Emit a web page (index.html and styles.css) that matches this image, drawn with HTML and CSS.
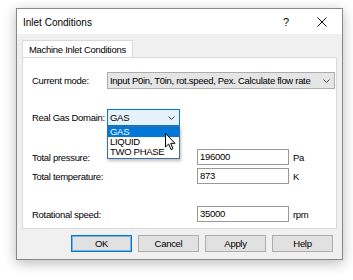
FILE: index.html
```html
<html>
    <head>
        <meta charset="utf-8">
        <title>Inlet Conditions</title>
        <link rel="stylesheet" href="styles.css">
    </head>
    <body>
        <div class="dialog">
            <div class="titlebar">
                <span class="title">Inlet Conditions</span>
                <span class="help">?</span>
                <svg class="close" width="10" height="10" viewBox="0 0 10 10">
                    <path d="M0.5 0.5 L9.5 9.5 M9.5 0.5 L0.5 9.5" stroke="#111" stroke-width="1" fill="none"/>
                </svg>
            </div>
            <div class="content">
                <div class="tabs">
                    <div class="tab">Machine Inlet Conditions</div>
                </div>
                <div class="panel">
                    <div class="row row-mode">
                        <span class="label short">Current mode:</span>
                        <div class="combo wide">
                            <span>Input P0in, T0in, rot.speed, Pex. Calculate flow rate</span>
                            <svg class="chevron" width="7" height="4" viewBox="0 0 7 4"><path d="M0.5 0.5 L3.5 3.5 L6.5 0.5" stroke="#444" fill="none"/></svg>
                        </div>
                    </div>
                    <div class="row row-gas">
                        <span class="label short">Real Gas Domain:</span>
                        <div class="combo narrow focused">
                            <span>GAS</span>
                            <svg class="chevron" width="7" height="4" viewBox="0 0 7 4"><path d="M0.5 0.5 L3.5 3.5 L6.5 0.5" stroke="#444" fill="none"/></svg>
                            <ul class="droplist">
                                <li class="selected">GAS</li>
                                <li>LIQUID</li>
                                <li>TWO PHASE</li>
                            </ul>
                            <svg class="cursor" width="12" height="18" viewBox="0 0 12 18">
                                <path d="M0.5 0.5 L0.5 14 L3.6 11 L6 16.6 L8 15.7 L5.7 10.3 L10 10.3 Z" fill="#fff" stroke="#000" stroke-width="1" stroke-linejoin="miter"/>
                            </svg>
                        </div>
                    </div>
                    <div class="row row-pressure">
                        <span class="label long">Total pressure:</span>
                        <div class="textbox">196000</div>
                        <span class="unit">Pa</span>
                    </div>
                    <div class="row row-temp">
                        <span class="label long">Total temperature:</span>
                        <div class="textbox">873</div>
                        <span class="unit">K</span>
                    </div>
                    <div class="row row-speed">
                        <span class="label long">Rotational speed:</span>
                        <div class="textbox">35000</div>
                        <span class="unit">rpm</span>
                    </div>
                </div>
                <div class="buttons">
                    <div class="button default">OK</div>
                    <div class="button">Cancel</div>
                    <div class="button">Apply</div>
                    <div class="button">Help</div>
                </div>
            </div>
        </div>
    </body>
</html>
```

FILE: styles.css
```css
/* windows style dialog */
body {
    margin: 0;
    background-color: #fff;
    font-family: "Liberation Sans", Arial, sans-serif;
    font-size: 9.5px;
    letter-spacing: -0.3px;
    color: #000;
}
.dialog {
    margin: 8px 0 0 16px;
    width: 327px;
    height: 252px;
    box-sizing: border-box;
    border: 1px solid #888;
    background-color: #f0f0f0;
    box-shadow: 0 3px 12px rgba(0,0,0,0.28);
}
.titlebar {
    height: 25px;
    background-color: #fff;
    display: flex;
    align-items: center;
    padding-left: 6px;
}
.title {
    font-size: 10px;
    letter-spacing: 0;
    flex: 1;
    padding-top: 1px;
}
.help {
    font-size: 11px;
    letter-spacing: 0;
    margin-right: 28px;
}
.close {
    margin-right: 15px;
}
.content {
    padding: 6px 5px 0 5px;
}
.tabs {
    display: flex;
    height: 17px;
}
.tab {
    position: relative;
    z-index: 1;
    background-color: #fff;
    border: 1px solid #d9d9d9;
    border-bottom: none;
    height: 17px;
    box-sizing: border-box;
    padding: 0 6px;
    line-height: 17px;
    margin-bottom: -1px;
    white-space: nowrap;
}
.panel {
    height: 172px;
    width: 315px;
    box-sizing: border-box;
    background-color: #fff;
    border: 1px solid #d9d9d9;
    padding: 14px 0 0 9px;
}
.row {
    display: flex;
    align-items: center;
    white-space: nowrap;
}
.row-gas {
    margin-top: 20px;
}
.row-pressure {
    margin-top: 23px;
}
.row-temp {
    margin-top: 3px;
}
.row-speed {
    margin-top: 22px;
}
.label.short {
    width: 75px;
}
.label.long {
    width: 165px;
}
.combo {
    position: relative;
    height: 17px;
    box-sizing: border-box;
    border: 1px solid #adadad;
    background-color: #e5e5e5;
    display: flex;
    align-items: center;
    padding-left: 2px;
}
.combo span {
    flex: 1;
    overflow: hidden;
}
.combo .chevron {
    margin-right: 4px;
}
.combo.wide {
    width: 228px;
}
.combo.narrow {
    width: 73px;
}
.combo.focused {
    background-color: #e5f1fb;
    border-color: #0078d7;
}
.droplist {
    position: absolute;
    top: 16px;
    left: -1px;
    width: 73px;
    box-sizing: border-box;
    margin: 0;
    padding: 0 0 1px 0;
    list-style: none;
    background-color: #fff;
    border: 1px solid #3b6ea5;
    box-shadow: 1px 2px 3px rgba(0,0,0,0.25);
    z-index: 2;
}
.droplist li {
    height: 10px;
    line-height: 10px;
    padding-left: 2px;
}
.droplist li.selected {
    background-color: #0078d7;
    color: #fff;
}
.cursor {
    position: absolute;
    left: 57px;
    top: 23px;
    z-index: 3;
}
.textbox {
    width: 92px;
    height: 16px;
    box-sizing: border-box;
    border: 1px solid #999;
    background-color: #fff;
    padding-left: 2px;
    line-height: 14px;
}
.unit {
    margin-left: 4px;
}
.buttons {
    display: flex;
    justify-content: flex-end;
    gap: 6px;
    margin-top: 6px;
    padding-right: 4px;
}
.button {
    width: 61px;
    height: 17px;
    box-sizing: border-box;
    border: 1px solid #adadad;
    background-color: #e1e1e1;
    text-align: center;
    line-height: 15px;
}
.button.default {
    border-color: #0078d7;
    box-shadow: inset 0 0 0 1px rgba(0,120,215,0.45);
}
```
